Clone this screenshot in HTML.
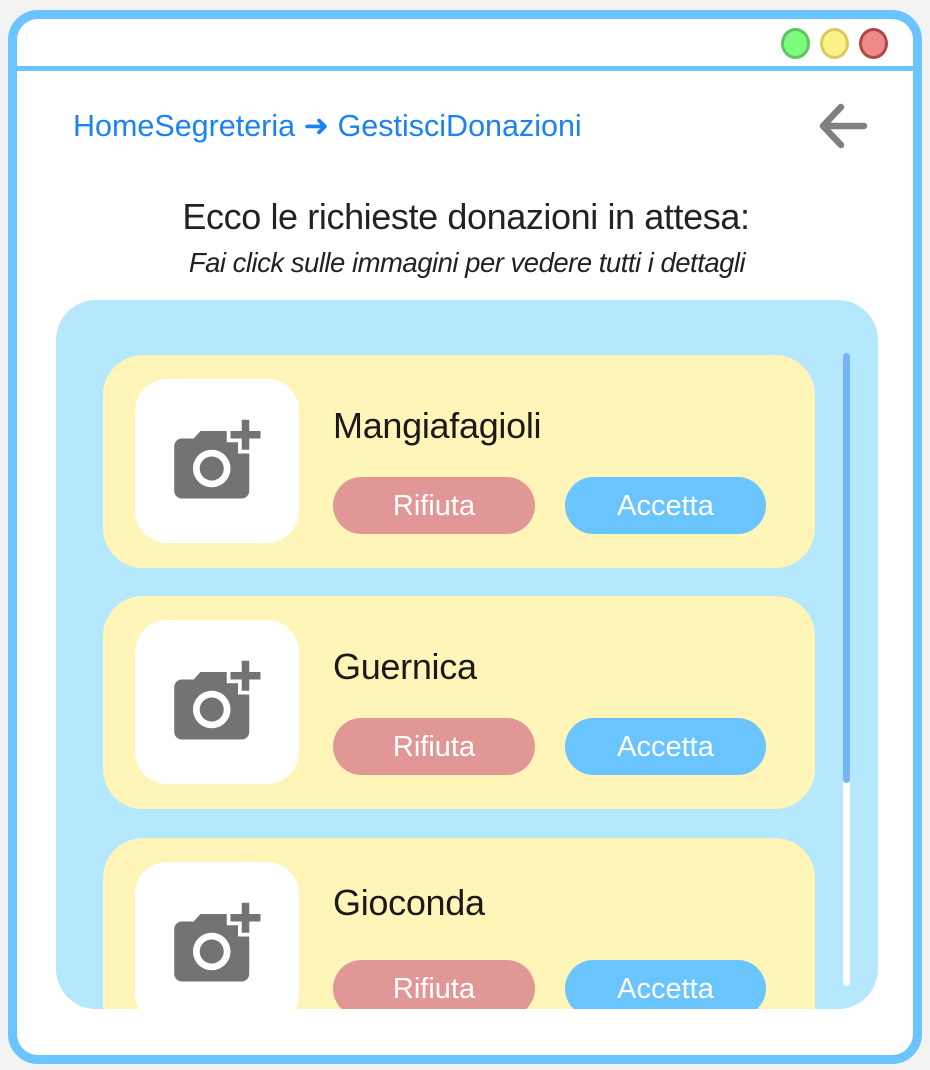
<!DOCTYPE html>
<html><head><meta charset="utf-8"><style>
*{margin:0;padding:0;box-sizing:border-box}
body{width:930px;height:1070px;background:#f3f3f3;position:relative;overflow:hidden;font-family:"Liberation Sans",sans-serif}
.frame{position:absolute;left:8px;top:10px;width:914px;height:1054px;border:9px solid #6ac4ff;border-radius:30px;background:#fff}
.hline{position:absolute;left:8px;top:66px;width:914px;height:5px;background:#6ac4ff}
.dot{position:absolute;top:28px;width:29px;height:31px;border-radius:50%}
.bc{position:absolute;left:73px;top:109px;font-size:30.5px;color:#1a82f7;letter-spacing:0;white-space:nowrap}
.t1{position:absolute;left:0;width:932px;text-align:center;top:196px;font-size:36px;color:#222;letter-spacing:-0.4px;white-space:nowrap}
.t2{position:absolute;left:0;width:934px;text-align:center;top:247px;font-size:27.5px;color:#222;font-style:italic;letter-spacing:-0.5px;white-space:nowrap}
.panel{position:absolute;left:56px;top:300px;width:822px;height:709px;background:#b5e8fd;border-radius:40px;overflow:hidden}
.card{position:absolute;left:47px;width:712px;height:213px;background:#fff5b9;border-radius:40px}
.img{position:absolute;left:32px;top:24px;width:164px;height:164px;background:#fff;border-radius:32px}
.img svg{position:absolute;left:33px;top:37px}
.name{position:absolute;left:230px;top:50px;font-size:36px;color:#1a1a1a;letter-spacing:-0.3px}
.btn{position:absolute;top:122px;width:202px;height:57px;border-radius:29px;color:#fff;font-size:29px;text-align:center;line-height:59px}
.r{left:230px;background:#e29797}.a{left:462px;width:201px;background:#6ac4fd}
.track{position:absolute;left:787px;top:53px;width:7px;height:633px;background:#fff;border-radius:4px}
.thumb{position:absolute;left:787px;top:53px;width:7px;height:430px;background:#74b4fb;border-radius:4px}
</style></head><body>
<div class="frame"></div>
<div class="hline"></div>
<div class="dot" style="left:781px;background:#7dfb7d;border:3px solid #5ec45e"></div>
<div class="dot" style="left:820px;background:#fff18a;border:3px solid #d8cc60"></div>
<div class="dot" style="left:859px;background:#ef8a8a;border:3px solid #b04848"></div>
<div class="bc">HomeSegreteria ➜ GestisciDonazioni</div>
<svg style="position:absolute;left:818px;top:103px" width="50" height="46" viewBox="0 0 50 46"><path d="M46 23H6M23 4L5 23L23 42" fill="none" stroke="#808080" stroke-width="6.5" stroke-linecap="round" stroke-linejoin="round"/></svg>
<div class="t1">Ecco le richieste donazioni in attesa:</div>
<div class="t2">Fai click sulle immagini per vedere tutti i dettagli</div>
<div class="panel">
<div class="card" style="top:55px"><div class="img"><svg width="95" height="90" viewBox="0 0 25 24"><g transform="translate(24.5,0) scale(-1,1)"><path fill="#737373" d="M3 4V1h2v3h3v2H5v3H3V6H0V4h3zm3 6V7h3V4h7l1.83 2H21c1.1 0 2 .9 2 2v12c0 1.1-.9 2-2 2H5c-1.1 0-2-.9-2-2V10h3zm7 9c2.76 0 5-2.240 5-5s-2.24-5-5-5-5 2.24-5 5 2.24 5 5 5zm-3.2-5c0 1.77 1.43 3.2 3.2 3.2s3.2-1.43 3.2-3.2-1.43-3.2-3.2-3.2-3.2 1.43-3.2 3.2z"/></g></svg></div><div class="name">Mangiafagioli</div><div class="btn r">Rifiuta</div><div class="btn a">Accetta</div></div>
<div class="card" style="top:296px"><div class="img"><svg width="95" height="90" viewBox="0 0 25 24"><g transform="translate(24.5,0) scale(-1,1)"><path fill="#737373" d="M3 4V1h2v3h3v2H5v3H3V6H0V4h3zm3 6V7h3V4h7l1.83 2H21c1.1 0 2 .9 2 2v12c0 1.1-.9 2-2 2H5c-1.1 0-2-.9-2-2V10h3zm7 9c2.76 0 5-2.240 5-5s-2.24-5-5-5-5 2.24-5 5 2.24 5 5 5zm-3.2-5c0 1.77 1.43 3.2 3.2 3.2s3.2-1.43 3.2-3.2-1.43-3.2-3.2-3.2-3.2 1.430-3.2 3.2z"/></g></svg></div><div class="name">Guernica</div><div class="btn r">Rifiuta</div><div class="btn a">Accetta</div></div>
<div class="card" style="top:538px"><div class="img"><svg width="95" height="90" viewBox="0 0 25 24"><g transform="translate(24.5,0) scale(-1,1)"><path fill="#737373" d="M3 4V1h2v3h3v2H5v3H3V6H0V4h3zm3 6V7h3V4h7l1.83 2H21c1.1 0 2 .9 2 2v12c0 1.1-.9 2-2 2H5c-1.1 0-2-.9-2-2V10h3zm7 9c2.76 0 5-2.240 5-5s-2.24-5-5-5-5 2.24-5 5 2.24 5 5 5zm-3.2-5c0 1.77 1.43 3.2 3.2 3.2s3.2-1.43 3.2-3.2-1.43-3.2-3.2-3.2-3.2 1.43-3.2 3.2z"/></g></svg></div><div class="name" style="top:44px">Gioconda</div><div class="btn r">Rifiuta</div><div class="btn a">Accetta</div></div>
<div class="track"></div><div class="thumb"></div>
</div>
</body></html>
